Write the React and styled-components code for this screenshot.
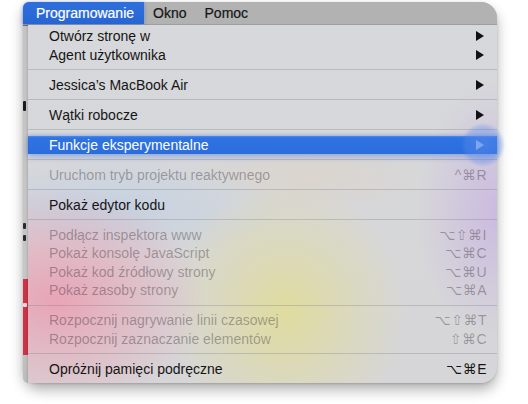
import React from "react";
import styled, { createGlobalStyle } from "styled-components";

const Global = createGlobalStyle`
  html, body { margin: 0; padding: 0; background: #ffffff; }
  body { font-family: "Liberation Sans", Arial, "DejaVu Sans", sans-serif; }
`;

const Page = styled.div`
  width: 528px;
  height: 404px;
  padding: 2px 0 0 23px;
  box-sizing: border-box;
  background: #ffffff;
`;

const Window = styled.div`
  width: 474px;
  height: 381px;
  display: flex;
  flex-direction: column;
  border-radius: 6px 16px 16px 16px;
  box-shadow: 0 7px 13px rgba(0, 0, 0, 0.3), 0 1px 3px rgba(0, 0, 0, 0.12);
  background: #c9c9c9;
`;

const MenuBar = styled.div`
  height: 22px;
  display: flex;
  align-items: stretch;
  background: #b2b2b2;
  border-radius: 6px 16px 0 0;
  border-bottom: 1px solid #a3a3a3;
  box-sizing: content-box;
`;

const BarItem = styled.div`
  display: flex;
  align-items: center;
  padding-left: ${(p) => (p.$active ? "13px" : "9px")};
  padding-right: ${(p) => (p.$active ? "10px" : "9px")};
  font-size: 14px;
  -webkit-text-stroke: 0.2px ${(p) => (p.$active ? "#ffffff" : "#151515")};
  color: ${(p) => (p.$active ? "#ffffff" : "#151515")};
  background: ${(p) => (p.$active ? "linear-gradient(#2f6fdc, #2766d2)" : "transparent")};
  border-radius: ${(p) => (p.$active ? "6px 0 0 0" : "0")};
  box-shadow: ${(p) => (p.$active ? "0 1px 4px rgba(30, 90, 200, 0.45)" : "none")};
`;

const Body = styled.div`
  flex: 1;
  display: flex;
  min-height: 0;
`;

const Strip = styled.div`
  width: 5px;
  display: flex;
  flex-direction: column;
  border-bottom-left-radius: 16px;
  overflow: hidden;
  background: linear-gradient(
    to bottom,
    #6a6a6a 0,
    #6a6a6a 1px,
    #c4c4c4 1px,
    #c6c6c6 254px,
    #cc3446 254px,
    #cc3446 330px,
    #c0c0c0 330px,
    #bdbdbd 100%
  );
`;

const StripMark = styled.div`
  width: ${(p) => p.$w}px;
  height: ${(p) => p.$h}px;
  margin-top: ${(p) => p.$top}px;
  background: ${(p) => p.$color};
  border-radius: 1px;
`;

const Menu = styled.div`
  flex: 1;
  position: relative;
  padding: 2px 0 4px;
  border-bottom-right-radius: 16px;
  box-shadow: -1px 0 2px rgba(0, 0, 0, 0.12);
  background:
    radial-gradient(ellipse 150px 115px at 6% 77%, rgba(238, 150, 172, 0.78), rgba(238, 150, 172, 0) 100%),
    radial-gradient(ellipse 120px 130px at 55% 80%, rgba(228, 222, 135, 0.7), rgba(228, 222, 135, 0) 100%),
    radial-gradient(ellipse 80px 130px at 100% 52%, rgba(196, 168, 228, 0.6), rgba(196, 168, 228, 0) 100%),
    radial-gradient(ellipse 170px 50px at 18% 51%, rgba(182, 206, 232, 0.55), rgba(182, 206, 232, 0) 100%),
    radial-gradient(ellipse 120px 40px at 60% 42%, rgba(224, 210, 190, 0.45), rgba(224, 210, 190, 0) 100%),
    linear-gradient(#d7d8db, #d6d6d8);
`;

const Item = styled.div`
  position: relative;
  height: 18.5px;
  display: flex;
  align-items: center;
  justify-content: space-between;
  padding: 0 10px 0 21px;
  font-size: 14px;
  line-height: 1;
  color: ${(p) => (p.$disabled ? "rgba(40, 30, 40, 0.36)" : "#151515")};
  ${(p) =>
    p.$selected &&
    `
    color: #ffffff;
    background: linear-gradient(#4a8af0 0, #2f72e2 2px, #2b6ddc 100%);
    box-shadow: 0 3px 6px rgba(40, 100, 220, 0.35), 0 -1px 3px rgba(60, 120, 230, 0.35);
  `}
`;

const Glow = styled.div`
  position: absolute;
  right: -8px;
  top: 50%;
  width: 44px;
  height: 44px;
  margin-top: -22px;
  border-radius: 50%;
  background: radial-gradient(circle, rgba(90, 140, 235, 0.55) 0, rgba(90, 140, 235, 0.35) 55%, rgba(90, 140, 235, 0) 72%);
  pointer-events: none;
`;

const Label = styled.span`
  white-space: nowrap;
`;

const Shortcut = styled.span`
  font-family: "Liberation Sans", "DejaVu Sans", sans-serif;
  font-size: 14px;
  letter-spacing: 0.5px;
  white-space: nowrap;
  color: ${(p) => (p.$strong ? "#151515" : "rgba(40, 30, 40, 0.36)")};
`;

const Arrow = styled.svg`
  width: 8px;
  height: 10px;
  margin-right: 3px;
  flex: none;
`;

const Separator = styled.div`
  height: 11.5px;
  display: flex;
  align-items: center;
  &::after {
    content: "";
    flex: 1;
    height: 1px;
    background: rgba(120, 120, 125, 0.3);
  }
`;

const SubArrow = ({ light }) => (
  <Arrow viewBox="0 0 8 10">
    <polygon points="0,0 8,5 0,10" fill={light ? "rgba(200, 220, 255, 0.75)" : "#111"} />
  </Arrow>
);

const groups = [
  [
    { label: "Otwórz stronę w", sub: true },
    { label: "Agent użytkownika", sub: true },
  ],
  [{ label: "Jessica’s MacBook Air", sub: true }],
  [{ label: "Wątki robocze", sub: true }],
  [{ label: "Funkcje eksperymentalne", sub: true, selected: true }],
  [{ label: "Uruchom tryb projektu reaktywnego", disabled: true, key: "^⌘R" }],
  [{ label: "Pokaż edytor kodu" }],
  [
    { label: "Podłącz inspektora www", disabled: true, key: "⌥⇧⌘I" },
    { label: "Pokaż konsolę JavaScript", disabled: true, key: "⌥⌘C" },
    { label: "Pokaż kod źródłowy strony", disabled: true, key: "⌥⌘U" },
    { label: "Pokaż zasoby strony", disabled: true, key: "⌥⌘A" },
  ],
  [
    { label: "Rozpocznij nagrywanie linii czasowej", disabled: true, key: "⌥⇧⌘T" },
    { label: "Rozpocznij zaznaczanie elementów", disabled: true, key: "⇧⌘C" },
  ],
  [{ label: "Opróżnij pamięci podręczne", key: "⌥⌘E", strong: true }],
];

export default function App() {
  return (
    <>
      <Global />
      <Page>
        <Window>
          <MenuBar>
            <BarItem $active>Programowanie</BarItem>
            <BarItem>Okno</BarItem>
            <BarItem>Pomoc</BarItem>
          </MenuBar>
          <Body>
            <Strip>
              <StripMark $top={76} $w={3} $h={10} $color="#1a1a1a" />
              <StripMark $top={112} $w={3} $h={6} $color="#2a2a2a" />
              <StripMark $top={6} $w={3} $h={6} $color="#2a2a2a" />
              <StripMark $top={62} $w={4} $h={4} $color="#f4dde0" />
            </Strip>
            <Menu>
              {groups.map((g, gi) => (
                <React.Fragment key={gi}>
                  {gi > 0 && <Separator />}
                  {g.map((it) => (
                    <Item key={it.label} $disabled={it.disabled} $selected={it.selected}>
                      <Label>{it.label}</Label>
                      {it.sub && <SubArrow light={it.selected} />}
                      {it.key && <Shortcut $strong={it.strong}>{it.key}</Shortcut>}
                      {it.selected && <Glow />}
                    </Item>
                  ))}
                </React.Fragment>
              ))}
            </Menu>
          </Body>
        </Window>
      </Page>
    </>
  );
}
